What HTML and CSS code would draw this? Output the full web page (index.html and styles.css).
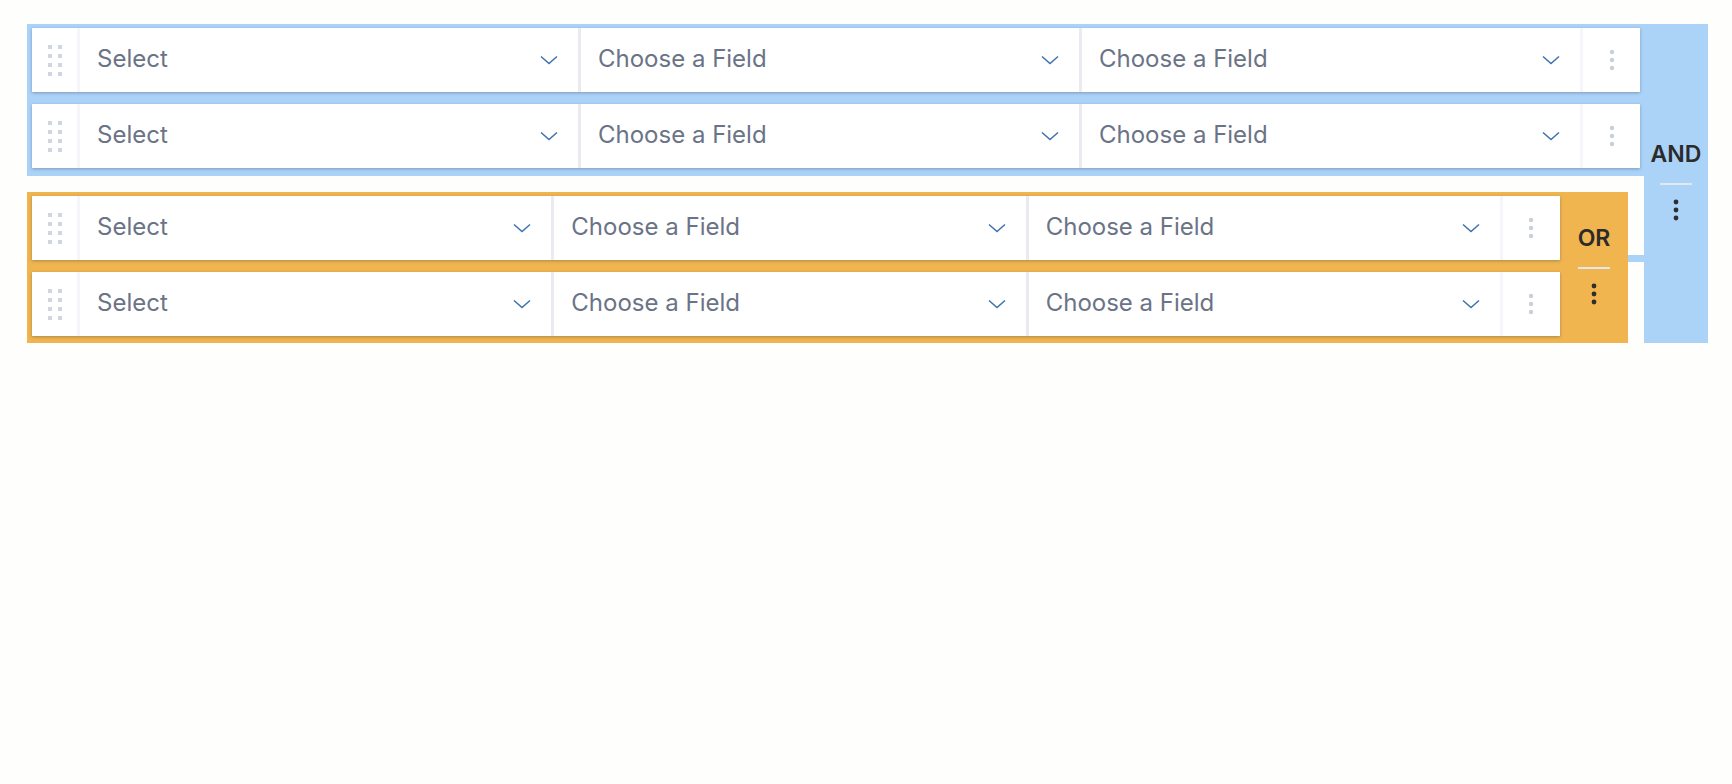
FILE: index.html
```html
<!DOCTYPE html>
<html lang="en">
<head>
<meta charset="utf-8">
<title>Query builder</title>
<link rel="stylesheet" href="styles.css">
</head>
<body>
<div class="group group-and">
  <div class="group-body">
    <div class="rules">
      <div class="rule">
        <div class="handle"><svg width="14" height="31" viewBox="0 0 14 31"><g fill="#cfd6e0"><rect x="0" y="0" width="4" height="4"/><rect x="10" y="0" width="4" height="4"/><rect x="0" y="9" width="4" height="4"/><rect x="10" y="9" width="4" height="4"/><rect x="0" y="18" width="4" height="4"/><rect x="10" y="18" width="4" height="4"/><rect x="0" y="27" width="4" height="4"/><rect x="10" y="27" width="4" height="4"/></g></svg></div>
        <div class="cell"><span class="label">Select</span><svg class="chev" width="18" height="10" viewBox="0 0 18 10"><path d="M1 1.5 L9 8.5 L17 1.5" fill="none" stroke="#3d72ad" stroke-width="1.5"/></svg></div>
        <div class="cell"><span class="label">Choose a Field</span><svg class="chev" width="18" height="10" viewBox="0 0 18 10"><path d="M1 1.5 L9 8.5 L17 1.5" fill="none" stroke="#3d72ad" stroke-width="1.5"/></svg></div>
        <div class="cell"><span class="label">Choose a Field</span><svg class="chev" width="18" height="10" viewBox="0 0 18 10"><path d="M1 1.5 L9 8.5 L17 1.5" fill="none" stroke="#3d72ad" stroke-width="1.5"/></svg></div>
        <div class="kebab"><svg width="6" height="22" viewBox="0 0 6 22"><g fill="#c9ced8"><circle cx="3" cy="3" r="2.2"/><circle cx="3" cy="11" r="2.2"/><circle cx="3" cy="19" r="2.2"/></g></svg></div>
      </div>
      <div class="rule">
        <div class="handle"><svg width="14" height="31" viewBox="0 0 14 31"><g fill="#cfd6e0"><rect x="0" y="0" width="4" height="4"/><rect x="10" y="0" width="4" height="4"/><rect x="0" y="9" width="4" height="4"/><rect x="10" y="9" width="4" height="4"/><rect x="0" y="18" width="4" height="4"/><rect x="10" y="18" width="4" height="4"/><rect x="0" y="27" width="4" height="4"/><rect x="10" y="27" width="4" height="4"/></g></svg></div>
        <div class="cell"><span class="label">Select</span><svg class="chev" width="18" height="10" viewBox="0 0 18 10"><path d="M1 1.5 L9 8.5 L17 1.5" fill="none" stroke="#3d72ad" stroke-width="1.5"/></svg></div>
        <div class="cell"><span class="label">Choose a Field</span><svg class="chev" width="18" height="10" viewBox="0 0 18 10"><path d="M1 1.5 L9 8.5 L17 1.5" fill="none" stroke="#3d72ad" stroke-width="1.5"/></svg></div>
        <div class="cell"><span class="label">Choose a Field</span><svg class="chev" width="18" height="10" viewBox="0 0 18 10"><path d="M1 1.5 L9 8.5 L17 1.5" fill="none" stroke="#3d72ad" stroke-width="1.5"/></svg></div>
        <div class="kebab"><svg width="6" height="22" viewBox="0 0 6 22"><g fill="#c9ced8"><circle cx="3" cy="3" r="2.2"/><circle cx="3" cy="11" r="2.2"/><circle cx="3" cy="19" r="2.2"/></g></svg></div>
      </div>
    </div>
    <div class="child">
      <div class="group group-or">
        <div class="group-body">
          <div class="rules">
            <div class="rule">
              <div class="handle"><svg width="14" height="31" viewBox="0 0 14 31"><g fill="#cfd6e0"><rect x="0" y="0" width="4" height="4"/><rect x="10" y="0" width="4" height="4"/><rect x="0" y="9" width="4" height="4"/><rect x="10" y="9" width="4" height="4"/><rect x="0" y="18" width="4" height="4"/><rect x="10" y="18" width="4" height="4"/><rect x="0" y="27" width="4" height="4"/><rect x="10" y="27" width="4" height="4"/></g></svg></div>
              <div class="cell"><span class="label">Select</span><svg class="chev" width="18" height="10" viewBox="0 0 18 10"><path d="M1 1.5 L9 8.5 L17 1.5" fill="none" stroke="#3d72ad" stroke-width="1.5"/></svg></div>
              <div class="cell"><span class="label">Choose a Field</span><svg class="chev" width="18" height="10" viewBox="0 0 18 10"><path d="M1 1.5 L9 8.5 L17 1.5" fill="none" stroke="#3d72ad" stroke-width="1.5"/></svg></div>
              <div class="cell"><span class="label">Choose a Field</span><svg class="chev" width="18" height="10" viewBox="0 0 18 10"><path d="M1 1.5 L9 8.5 L17 1.5" fill="none" stroke="#3d72ad" stroke-width="1.5"/></svg></div>
              <div class="kebab"><svg width="6" height="22" viewBox="0 0 6 22"><g fill="#c9ced8"><circle cx="3" cy="3" r="2.2"/><circle cx="3" cy="11" r="2.2"/><circle cx="3" cy="19" r="2.2"/></g></svg></div>
            </div>
            <div class="rule">
              <div class="handle"><svg width="14" height="31" viewBox="0 0 14 31"><g fill="#cfd6e0"><rect x="0" y="0" width="4" height="4"/><rect x="10" y="0" width="4" height="4"/><rect x="0" y="9" width="4" height="4"/><rect x="10" y="9" width="4" height="4"/><rect x="0" y="18" width="4" height="4"/><rect x="10" y="18" width="4" height="4"/><rect x="0" y="27" width="4" height="4"/><rect x="10" y="27" width="4" height="4"/></g></svg></div>
              <div class="cell"><span class="label">Select</span><svg class="chev" width="18" height="10" viewBox="0 0 18 10"><path d="M1 1.5 L9 8.5 L17 1.5" fill="none" stroke="#3d72ad" stroke-width="1.5"/></svg></div>
              <div class="cell"><span class="label">Choose a Field</span><svg class="chev" width="18" height="10" viewBox="0 0 18 10"><path d="M1 1.5 L9 8.5 L17 1.5" fill="none" stroke="#3d72ad" stroke-width="1.5"/></svg></div>
              <div class="cell"><span class="label">Choose a Field</span><svg class="chev" width="18" height="10" viewBox="0 0 18 10"><path d="M1 1.5 L9 8.5 L17 1.5" fill="none" stroke="#3d72ad" stroke-width="1.5"/></svg></div>
              <div class="kebab"><svg width="6" height="22" viewBox="0 0 6 22"><g fill="#c9ced8"><circle cx="3" cy="3" r="2.2"/><circle cx="3" cy="11" r="2.2"/><circle cx="3" cy="19" r="2.2"/></g></svg></div>
            </div>
          </div>
        </div>
        <div class="side side-or">
          <div class="op">OR</div>
          <div class="rule-line"></div>
          <div class="menu"><svg width="6" height="22" viewBox="0 0 6 22"><g fill="#2e2e2e"><circle cx="3" cy="3" r="2.4"/><circle cx="3" cy="11" r="2.4"/><circle cx="3" cy="19" r="2.4"/></g></svg></div>
        </div>
      </div>
      <div class="connector"></div>
    </div>
  </div>
  <div class="side side-and">
    <div class="op">AND</div>
    <div class="rule-line"></div>
    <div class="menu"><svg width="6" height="22" viewBox="0 0 6 22"><g fill="#2e2e2e"><circle cx="3" cy="3" r="2.4"/><circle cx="3" cy="11" r="2.4"/><circle cx="3" cy="19" r="2.4"/></g></svg></div>
  </div>
</div>
</body>
</html>
```
FILE: styles.css
```css
html, body {
  margin: 0;
  background: #fefefd;
}
body {
  padding: 24px 24px 0 27px;
  font-family: "Inter", "Lato", "Liberation Sans", sans-serif;
}
.group {
  display: flex;
  align-items: stretch;
}
.group-and {
  background: #abd3f8;
}
.group-or {
  background: #f0b54f;
}
.group-body {
  flex: 1;
  display: flex;
  flex-direction: column;
  min-width: 0;
}
.group-and > .group-body > .rules {
  padding: 4px 4px 8px 5px;
}
.group-or > .group-body {
  padding: 4px 0 7px 5px;
}
.rules {
  display: flex;
  flex-direction: column;
  gap: 12px;
}
.child {
  position: relative;
  background: #fefefd;
  padding: 16px 16px 0 0;
}
.connector {
  position: absolute;
  right: 0;
  top: 79px;
  width: 16px;
  height: 7px;
  background: #abd3f8;
}
.rule {
  display: flex;
  height: 64px;
  background: #fff;
  box-shadow: 0 1px 3px rgba(40, 50, 70, 0.35);
}
.handle {
  width: 45px;
  flex: none;
  display: flex;
  align-items: center;
  justify-content: center;
  border-right: 3px solid #f4f6fa;
}
.cell {
  flex: 1;
  min-width: 0;
  display: flex;
  align-items: center;
  justify-content: space-between;
  padding: 0 20px 0 17px;
}
.cell + .cell {
  border-left: 3px solid #eaebef;
}
.label {
  font-size: 24px;
  font-weight: 400;
  color: #6b7386;
  white-space: nowrap;
  padding-bottom: 4px;
}
.chev {
  flex: none;
}
.kebab {
  width: 57px;
  flex: none;
  display: flex;
  align-items: center;
  justify-content: center;
  border-left: 3px solid #f4f6fa;
}
.side {
  display: grid;
  grid-template-rows: 1fr auto 1fr;
  justify-items: center;
  flex: none;
}
.side-and {
  width: 64px;
}
.side-or {
  width: 68px;
}
.op {
  align-self: end;
  font-size: 23px;
  line-height: 22px;
  font-weight: 600;
  color: #2b2b2b;
  margin-bottom: 18px;
}
.rule-line {
  width: 32px;
  height: 2px;
  background: #e3e7ee;
}
.menu {
  align-self: start;
  margin-top: 14px;
  line-height: 0;
}
```
